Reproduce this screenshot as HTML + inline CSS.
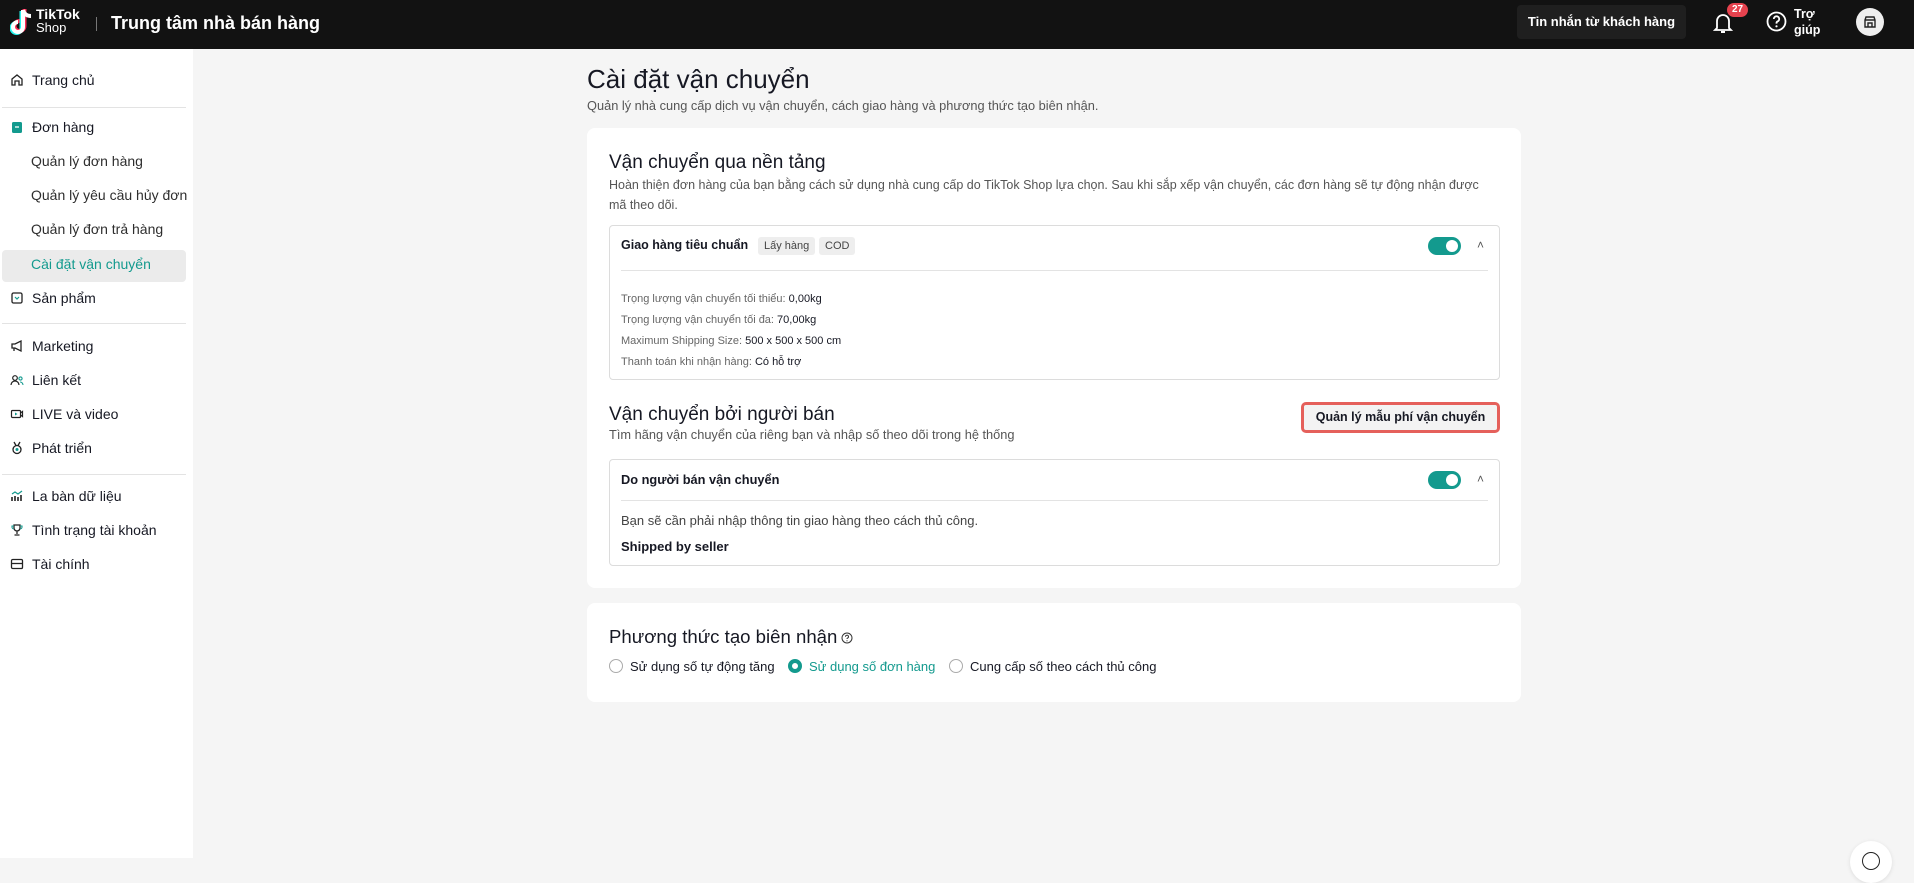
<!DOCTYPE html>
<html><head><meta charset="utf-8"><style>
*{box-sizing:border-box;margin:0;padding:0}
body{width:1914px;height:858px;overflow:hidden;background:#f5f5f5;font-family:"Liberation Sans",Arial,sans-serif;color:#161823;position:relative}
.a{position:absolute;white-space:nowrap}
.hdr{position:absolute;left:0;top:0;width:1914px;height:49px;background:#121212}
.side{position:absolute;left:0;top:49px;width:193px;height:809px;background:#fff}
.si{position:absolute;left:10px;font-size:14px;color:#161823;display:flex;align-items:center;gap:8px}
.si svg{width:14px;height:14px}
.sub{position:absolute;left:31px;font-size:14px;color:#2e2e2e}
.dv{position:absolute;left:2px;width:184px;height:1px;background:#e3e3e3}
.card{position:absolute;left:587px;width:934px;background:#fff;border-radius:8px}
.box{position:absolute;left:609px;width:891px;border:1px solid #dcdcdc;border-radius:4px;background:#fff}
.tog{position:absolute;width:33px;height:18px;border-radius:9px;background:#139a8e}
.tog:after{content:"";position:absolute;right:3px;top:3px;width:12px;height:12px;border-radius:50%;background:#fff}
.tag{position:absolute;top:237px;height:18px;line-height:18px;background:#eeeeee;border-radius:3px;font-size:11px;color:#444;padding:0 6px}
.lbl{color:#666}
.radio{position:absolute;top:659px;width:14px;height:14px;border-radius:50%;border:1px solid #aaa;background:#fff}
</style></head><body>
<div class="hdr">
  <svg class="a" style="left:10px;top:8px" width="26" height="30" viewBox="0 0 26 30"><path d="M13 2v17a5 5 0 1 1-5-5" fill="none" stroke="#25f4ee" stroke-width="4" transform="translate(-1.5,1)"/><path d="M13 2v17a5 5 0 1 1-5-5" fill="none" stroke="#fe2c55" stroke-width="4" transform="translate(1.5,-1)"/><path d="M13 2v17a5 5 0 1 1-5-5M13 2c1 4 4 6 8 6" fill="none" stroke="#fff" stroke-width="4"/></svg>
  <div class="a" style="left:36px;top:7px;color:#fff;font-weight:bold;font-size:14px;line-height:14px">TikTok</div>
  <div class="a" style="left:36px;top:21px;color:#fff;font-size:13px;line-height:14px">Shop</div>
  <div class="a" style="left:96px;top:17px;width:1px;height:14px;background:#777"></div>
  <div class="a" style="left:111px;top:11px;color:#fff;font-size:18px;font-weight:bold;line-height:24px">Trung tâm nhà bán hàng</div>
  <div class="a" style="left:1517px;top:5px;width:169px;height:34px;background:#1f1f1f;border-radius:4px;color:#fff;font-size:13px;font-weight:bold;text-align:center;line-height:34px">Tin nhắn từ khách hàng</div>
  <svg class="a" style="left:1713px;top:11px" width="20" height="24" viewBox="0 0 20 24"><path d="M4 17V10a6 6 0 0 1 12 0v7l2 2H2z" fill="none" stroke="#fff" stroke-width="1.8"/><path d="M8 21h4" stroke="#fff" stroke-width="2"/></svg>
  <div class="a" style="left:1727px;top:3px;width:21px;height:14px;border-radius:7px;background:#e6424e;color:#fff;font-size:10px;font-weight:bold;text-align:center;line-height:14px">27</div>
  <svg class="a" style="left:1766px;top:11px" width="21" height="21" viewBox="0 0 21 21"><circle cx="10.5" cy="10.5" r="9" fill="none" stroke="#fff" stroke-width="1.8"/><path d="M7.8 8a2.7 2.7 0 1 1 3.7 2.5c-.7.3-1 .8-1 1.6v.5" fill="none" stroke="#fff" stroke-width="1.8"/><circle cx="10.5" cy="15.3" r="1.1" fill="#fff"/></svg>
  <div class="a" style="left:1794px;top:6px;color:#fff;font-size:12.5px;font-weight:bold;line-height:16px">Trợ<br>giúp</div>
  <div class="a" style="left:1856px;top:8px;width:28px;height:28px;border-radius:50%;background:#eee"></div>
  <svg class="a" style="left:1863px;top:15px" width="14" height="14" viewBox="0 0 14 14"><path d="M2 5h10M2 5l1-3h8l1 3v7H2zM5 12V8h4v4" fill="none" stroke="#222" stroke-width="1.4"/></svg>
</div>

<div class="side">
  <div class="si" style="top:23px"><svg viewBox="0 0 14 14"><path d="M2 6l5-4 5 4v6H9V8H5v4H2z" fill="none" stroke="#222" stroke-width="1.3"/></svg>Trang chủ</div>
  <div class="dv" style="top:58px"></div>
  <div class="si" style="top:70px"><svg viewBox="0 0 14 14"><rect x="2" y="2" width="10" height="11" rx="1.5" fill="#139a8e"/><path d="M5 7h4" stroke="#fff" stroke-width="1.3"/></svg>Đơn hàng</div>
  <div class="sub" style="top:104px">Quản lý đơn hàng</div>
  <div class="sub" style="top:138px">Quản lý yêu cầu hủy đơn</div>
  <div class="sub" style="top:172px">Quản lý đơn trả hàng</div>
  <div class="a" style="left:2px;top:201px;width:184px;height:32px;background:#ebebeb;border-radius:4px"></div>
  <div class="sub" style="top:207px;color:#139a8e">Cài đặt vận chuyển</div>
  <div class="si" style="top:241px"><svg viewBox="0 0 14 14"><rect x="2" y="2" width="10" height="10" rx="1.5" fill="none" stroke="#222" stroke-width="1.3"/><path d="M5 6l2 2 2-2" fill="none" stroke="#139a8e" stroke-width="1.2"/></svg>Sản phẩm</div>
  <div class="dv" style="top:274px"></div>
  <div class="si" style="top:289px"><svg viewBox="0 0 14 14"><path d="M2 5h3l6-3v10L5 9H2zM4 9v3" fill="none" stroke="#222" stroke-width="1.3"/></svg>Marketing</div>
  <div class="si" style="top:323px"><svg viewBox="0 0 14 14"><circle cx="5" cy="5" r="2.3" fill="none" stroke="#222" stroke-width="1.2"/><path d="M1 12a4 4 0 0 1 8 0" fill="none" stroke="#222" stroke-width="1.2"/><circle cx="10.5" cy="5.5" r="1.6" fill="none" stroke="#139a8e" stroke-width="1.1"/><path d="M10 9a3 3 0 0 1 3 3" fill="none" stroke="#139a8e" stroke-width="1.1"/></svg>Liên kết</div>
  <div class="si" style="top:357px"><svg viewBox="0 0 14 14"><rect x="1.5" y="3.5" width="9" height="7" rx="1" fill="none" stroke="#222" stroke-width="1.2"/><path d="M10.5 6l2-1.5v5l-2-1.5" fill="none" stroke="#222" stroke-width="1.2"/><path d="M5 5.5v3l2.5-1.5z" fill="#139a8e"/></svg>LIVE và video</div>
  <div class="si" style="top:391px"><svg viewBox="0 0 14 14"><circle cx="7" cy="8.5" r="4" fill="none" stroke="#222" stroke-width="1.3"/><path d="M4 1l2 3.5M10 1L8 4.5" stroke="#222" stroke-width="1.3"/><circle cx="7" cy="8.5" r="1.5" fill="#139a8e"/></svg>Phát triển</div>
  <div class="dv" style="top:425px"></div>
  <div class="si" style="top:439px"><svg viewBox="0 0 14 14"><path d="M2 12V8M5 12V7M8 12V8M11 12V6" stroke="#222" stroke-width="1.6"/><path d="M2 5l3-2 3 2 4-3" fill="none" stroke="#139a8e" stroke-width="1.2"/></svg>La bàn dữ liệu</div>
  <div class="si" style="top:473px"><svg viewBox="0 0 14 14"><path d="M4 2h6v3a3 3 0 0 1-6 0zM7 8v3M4.5 12h5" fill="none" stroke="#222" stroke-width="1.3"/><path d="M4 3H2v1a2 2 0 0 0 2 2M10 3h2v1a2 2 0 0 1-2 2" fill="none" stroke="#139a8e" stroke-width="1.1"/></svg>Tình trạng tài khoản</div>
  <div class="si" style="top:507px"><svg viewBox="0 0 14 14"><rect x="1.5" y="2.5" width="11" height="9" rx="1.3" fill="none" stroke="#222" stroke-width="1.3"/><path d="M1.5 6.5h11" stroke="#222" stroke-width="1.3"/></svg>Tài chính</div>
</div>

<div class="a" style="left:587px;top:63px;font-size:26px;line-height:32px">Cài đặt vận chuyển</div>
<div class="a" style="left:587px;top:98px;font-size:12.8px;color:#555">Quản lý nhà cung cấp dịch vụ vận chuyển, cách giao hàng và phương thức tạo biên nhận.</div>

<div class="card" style="top:128px;height:460px"></div>
<div class="a" style="left:609px;top:151px;font-size:19px;line-height:24px">Vận chuyển qua nền tảng</div>
<div class="a" style="left:609px;top:175px;font-size:12.5px;color:#555;line-height:20px;white-space:normal;width:885px">Hoàn thiện đơn hàng của bạn bằng cách sử dụng nhà cung cấp do TikTok Shop lựa chọn. Sau khi sắp xếp vận chuyển, các đơn hàng sẽ tự động nhận được mã theo dõi.</div>
<div class="box" style="top:225px;height:155px"></div>
<div class="a" style="left:621px;top:238px;font-size:12.5px;font-weight:bold">Giao hàng tiêu chuẩn</div>
<div class="tag" style="left:758px">Lấy hàng</div>
<div class="tag" style="left:819px">COD</div>
<div class="tog" style="left:1428px;top:237px"></div>
<div class="a" style="left:1477px;top:238px;font-size:12px;color:#555">˄</div>
<div class="a" style="left:621px;top:270px;width:867px;height:1px;background:#e3e3e3"></div>
<div class="a" style="left:621px;top:289px;font-size:11px;line-height:21px"><span class="lbl">Trọng lượng vận chuyển tối thiểu:</span> 0,00kg<br><span class="lbl">Trọng lượng vận chuyển tối đa:</span> 70,00kg<br><span class="lbl">Maximum Shipping Size:</span> 500 x 500 x 500 cm<br><span class="lbl">Thanh toán khi nhận hàng:</span> Có hỗ trợ</div>

<div class="a" style="left:609px;top:403px;font-size:19px;line-height:24px">Vận chuyển bởi người bán</div>
<div class="a" style="left:609px;top:427px;font-size:12.8px;color:#555">Tìm hãng vận chuyển của riêng bạn và nhập số theo dõi trong hệ thống</div>
<div class="a" style="left:1301px;top:402px;width:199px;height:31px;border:3px solid #e5605b;border-radius:5px;background:#f3f3f3;font-size:12.5px;font-weight:bold;text-align:center;line-height:25px">Quản lý mẫu phí vận chuyển</div>
<div class="box" style="top:459px;height:107px"></div>
<div class="a" style="left:621px;top:472px;font-size:12.8px;font-weight:bold">Do người bán vận chuyển</div>
<div class="tog" style="left:1428px;top:471px"></div>
<div class="a" style="left:1477px;top:472px;font-size:12px;color:#555">˄</div>
<div class="a" style="left:621px;top:500px;width:867px;height:1px;background:#e3e3e3"></div>
<div class="a" style="left:621px;top:513px;font-size:13px;color:#444">Bạn sẽ cần phải nhập thông tin giao hàng theo cách thủ công.</div>
<div class="a" style="left:621px;top:539px;font-size:13px;font-weight:bold">Shipped by seller</div>

<div class="card" style="top:603px;height:99px"></div>
<div class="a" style="left:609px;top:625px;font-size:18.6px;line-height:24px">Phương thức tạo biên nhận</div>
<svg class="a" style="left:841px;top:632px" width="12" height="12" viewBox="0 0 12 12"><circle cx="6" cy="6" r="5" fill="none" stroke="#333" stroke-width="1"/><path d="M4.5 4.7a1.5 1.5 0 1 1 2 1.4c-.4.2-.5.4-.5.9" fill="none" stroke="#333" stroke-width="1"/><circle cx="6" cy="8.8" r=".6" fill="#333"/></svg>
<div class="radio" style="left:609px"></div>
<div class="a" style="left:630px;top:659px;font-size:13px">Sử dụng số tự động tăng</div>
<div class="radio" style="left:788px;border:4px solid #139a8e"></div>
<div class="a" style="left:809px;top:659px;font-size:13px;color:#139a8e">Sử dụng số đơn hàng</div>
<div class="radio" style="left:949px"></div>
<div class="a" style="left:970px;top:659px;font-size:13px">Cung cấp số theo cách thủ công</div>

<div class="a" style="left:1850px;top:841px;width:42px;height:42px;border-radius:50%;background:#fff;box-shadow:0 1px 4px rgba(0,0,0,.1)"></div>
<div class="a" style="left:1862px;top:852px;width:18px;height:18px;border-radius:50%;border:1.5px solid #222"></div>
</body></html>
